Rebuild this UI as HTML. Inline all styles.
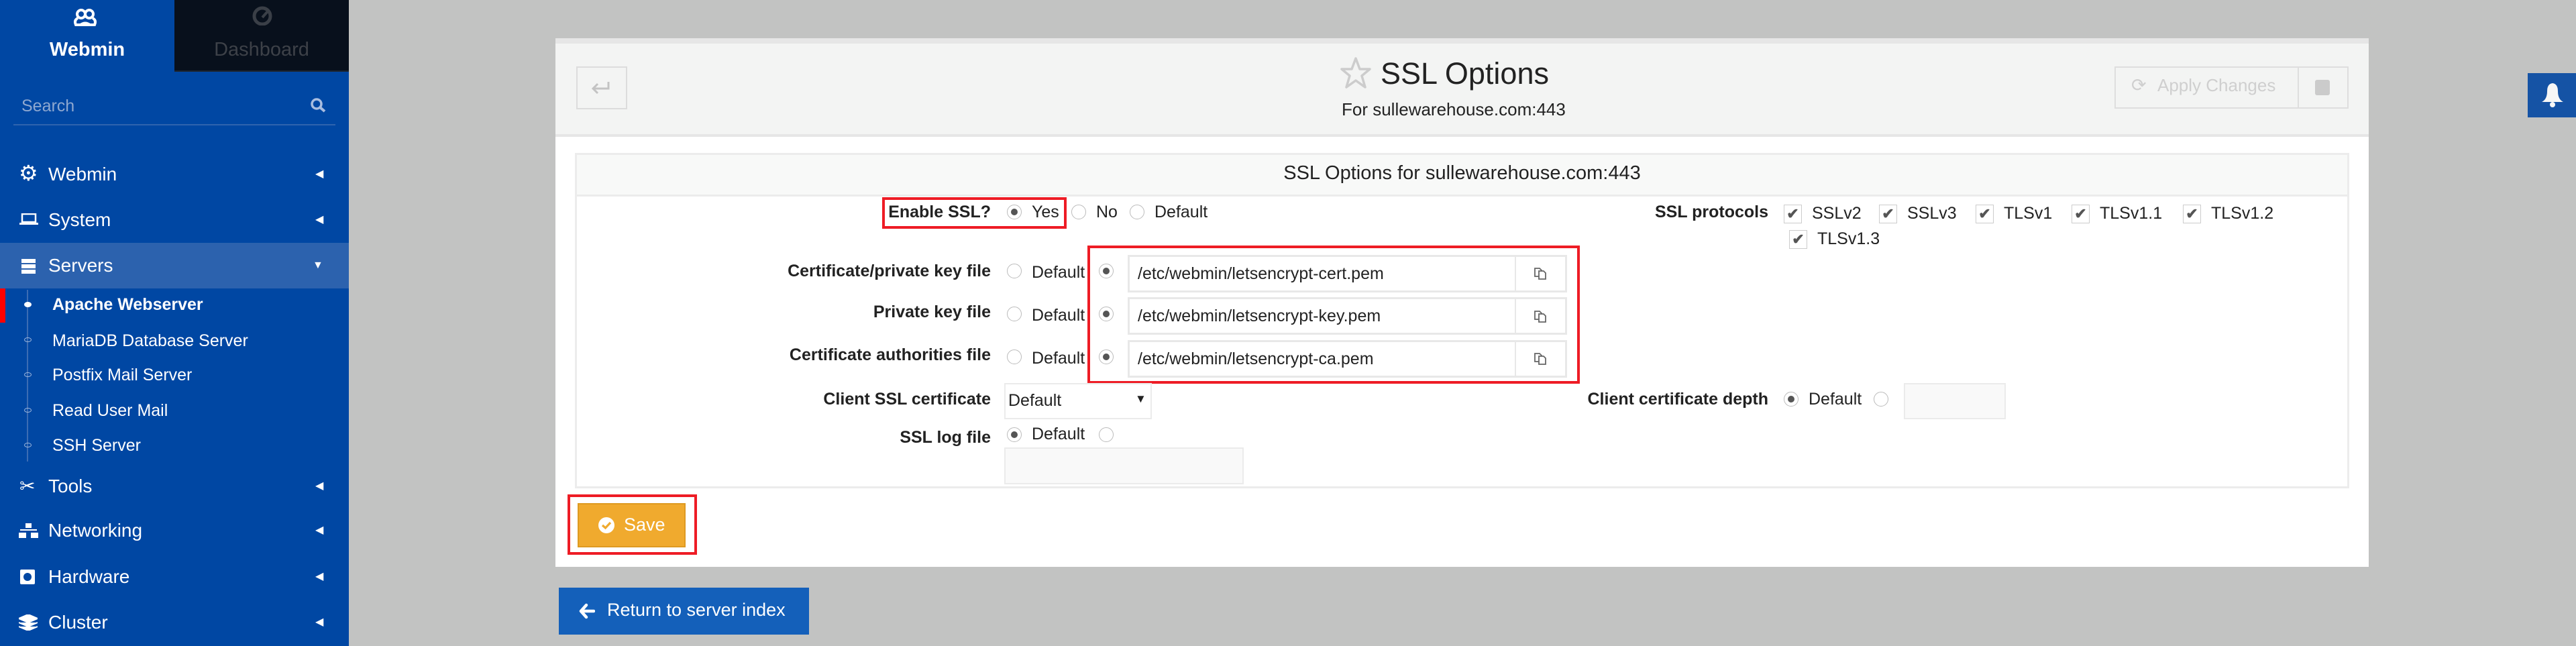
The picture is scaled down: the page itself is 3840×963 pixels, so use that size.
<!DOCTYPE html>
<html><head><meta charset="utf-8">
<style>
*{box-sizing:border-box;margin:0;padding:0}
body{width:3840px;height:963px;overflow:hidden;background:#c2c3c2;font-family:"Liberation Sans",sans-serif;position:relative;color:#222}
.a{position:absolute}
#sb{left:0;top:0;width:520px;height:963px;background:#0047a3}
.mi{position:absolute;left:0;width:520px;color:#fff;font-size:28px;line-height:40px}
.mi .t{position:absolute;left:72px}
.mi .c{position:absolute;left:470px;top:0;font-size:16px}
.si{position:absolute;left:78px;color:#fff;font-size:25px;line-height:36px}
.dot{position:absolute;left:36px;width:11px;height:7px;border:1.5px solid #9fb7dc;border-radius:50%}
.lbl{position:absolute;font-weight:bold;font-size:25px;text-align:right;line-height:30px}
.tx{position:absolute;font-size:25px;line-height:30px}
.rd{position:absolute;width:22px;height:22px;border:1.5px solid #bbb;border-radius:50%;background:#fff}
.rd.on::after{content:"";position:absolute;left:4.5px;top:4.5px;width:10px;height:10px;border-radius:50%;background:#555}
.cb{position:absolute;width:27px;height:28px;border:1.5px solid #ccc;background:#fff;color:#555;font-size:22px;text-align:center;line-height:26px;font-weight:bold}
.inp{position:absolute;height:56px;border:3px solid #e8e8e8;background:#fff;font-size:25px;line-height:50px;padding-left:12px}
.cp{position:absolute;width:78px;height:56px;border:3px solid #e8e8e8;border-left:2px solid #e8e8e8;background:#fff}
.red{position:absolute;border:4px solid #ee1c25}
</style></head><body>

<div id="sb" class="a">
  <div class="a" style="left:260px;top:0;width:260px;height:107px;background:#08101c;border-bottom:2px solid #1d2530"></div>
  <svg class="a" style="left:108px;top:10px" width="38" height="36" viewBox="0 0 38 36"><g fill="none" stroke="#fff" stroke-width="4"><circle cx="13" cy="11" r="6"/><circle cx="25" cy="11" r="6"/><path d="M8 17 Q2 20 5 27 H33 Q36 20 30 17"/><path d="M12 27 Q19 22 26 27"/></g></svg>
  <div class="a" style="left:0;top:58px;width:260px;text-align:center;color:#fff;font-weight:bold;font-size:29px">Webmin</div>
  <svg class="a" style="left:374px;top:8px" width="34" height="30" viewBox="0 0 34 30"><circle cx="17" cy="16" r="12" fill="none" stroke="#3a3f47" stroke-width="5"/><path d="M17 18 L25 9" stroke="#3a3f47" stroke-width="4"/></svg>
  <div class="a" style="left:260px;top:58px;width:260px;text-align:center;color:#3d4148;font-size:29px">Dashboard</div>
  <div class="a" style="left:32px;top:144px;color:#8ea8d0;font-size:25px">Search</div>
  <svg class="a" style="left:462px;top:146px" width="26" height="22" viewBox="0 0 26 22"><circle cx="10" cy="9" r="7" fill="none" stroke="#a9bde0" stroke-width="3.5"/><path d="M15 14 L22 20" stroke="#a9bde0" stroke-width="4"/></svg>
  <div class="a" style="left:20px;top:185px;width:480px;height:2px;background:#2f64ae"></div>

  <div class="a" style="left:0;top:362px;width:520px;height:68px;background:#2c62ae"></div>
  <div class="mi" style="top:240px"><span class="a" style="left:28px;font-size:32px;top:-2px">⚙</span><span class="t">Webmin</span><span class="c">◀</span></div>
  <div class="mi" style="top:308px"><svg class="a" style="left:29px;top:10px" width="28" height="18"><rect x="4" y="1" width="20" height="12" fill="none" stroke="#fff" stroke-width="2.5"/><rect x="0" y="14" width="28" height="3" fill="#fff"/></svg><span class="t">System</span><span class="c">◀</span></div>
  <div class="mi" style="top:376px"><svg class="a" style="left:32px;top:10px" width="21" height="22"><rect width="21" height="6" fill="#fff"/><rect y="8" width="21" height="6" fill="#fff"/><rect y="16" width="21" height="6" fill="#fff"/></svg><span class="t">Servers</span><span class="c" style="left:466px">▼</span></div>
  <div class="a" style="left:0;top:430px;width:8px;height:51px;background:#f00"></div>
  <div class="a" style="left:40px;top:432px;width:2px;height:256px;background:#3c6cb3"></div>
  <div class="a" style="left:36px;top:450px;width:11px;height:8px;border-radius:50%;background:#fff"></div>
  <div class="si" style="top:436px;font-weight:bold">Apache Webserver</div>
  <div class="dot" style="top:503px"></div><div class="si" style="top:490px">MariaDB Database Server</div>
  <div class="dot" style="top:555px"></div><div class="si" style="top:541px">Postfix Mail Server</div>
  <div class="dot" style="top:608px"></div><div class="si" style="top:594px">Read User Mail</div>
  <div class="dot" style="top:660px"></div><div class="si" style="top:646px">SSH Server</div>
  <div class="mi" style="top:705px"><span class="a" style="left:29px;font-size:28px">✂</span><span class="t">Tools</span><span class="c">◀</span></div>
  <div class="mi" style="top:771px"><svg class="a" style="left:28px;top:9px" width="29" height="22"><rect x="10" y="0" width="9" height="7" fill="#fff"/><rect x="2" y="9" width="25" height="2" fill="#fff"/><rect x="0" y="14" width="11" height="8" fill="#fff"/><rect x="18" y="14" width="11" height="8" fill="#fff"/></svg><span class="t">Networking</span><span class="c">◀</span></div>
  <div class="mi" style="top:840px"><svg class="a" style="left:30px;top:9px" width="22" height="22"><rect width="22" height="22" rx="2" fill="#fff"/><circle cx="11" cy="11" r="6" fill="#0047a3"/></svg><span class="t">Hardware</span><span class="c">◀</span></div>
  <div class="mi" style="top:908px"><svg class="a" style="left:28px;top:8px" width="28" height="24"><path d="M14 0 L28 6 L14 12 L0 6Z M0 12 L14 18 L28 12 M0 18 L14 24 L28 18" fill="#fff" stroke="#fff" stroke-width="2"/></svg><span class="t">Cluster</span><span class="c">◀</span></div>
</div>

<!-- main panel -->
<div class="a" style="left:828px;top:57px;width:2703px;height:788px;background:#fff"></div>
<div class="a" style="left:828px;top:57px;width:2703px;height:8px;background:#e6e6e6"></div>
<div class="a" style="left:828px;top:65px;width:2703px;height:136px;background:#f3f4f3"></div>
<div class="a" style="left:828px;top:200px;width:2703px;height:4px;background:#e6e6e6"></div>
<div class="a" style="left:859px;top:99px;width:76px;height:64px;border:2px solid #dcdcdc"></div>
<svg class="a" style="left:880px;top:120px" width="30" height="22"><path d="M27 2 V12 H4 M11 5 L4 12 L11 19" fill="none" stroke="#c3c3c3" stroke-width="3"/></svg>
<svg class="a" style="left:1998px;top:84px" width="46" height="50" viewBox="0 0 46 50"><path d="M23 3 L29 19 L44 19 L32 29 L37 46 L23 36 L9 46 L14 29 L2 19 L17 19Z" fill="none" stroke="#ccc" stroke-width="3.5" stroke-linejoin="round"/></svg>
<div class="a" style="left:2058px;top:84px;font-size:45px;color:#222">SSL Options</div>
<div class="a" style="left:2000px;top:148px;font-size:26px;color:#222">For sullewarehouse.com:443</div>
<div class="a" style="left:3152px;top:99px;width:349px;height:63px;border:2px solid #dedede"></div>
<div class="a" style="left:3425px;top:99px;width:2px;height:63px;background:#dedede"></div>
<div class="a" style="left:3177px;top:112px;font-size:27px;color:#cfcfcf">⟳</div>
<div class="a" style="left:3216px;top:112px;font-size:26px;color:#cfcfcf">Apply Changes</div>
<div class="a" style="left:3451px;top:119px;width:22px;height:23px;border-radius:3px;background:#cbcbcb"></div>
<div class="a" style="left:3768px;top:109px;width:72px;height:66px;background:#1553a5"></div>
<svg class="a" style="left:3787px;top:122px" width="36" height="40" viewBox="0 0 36 40"><path d="M18 2 Q10 3 10 14 Q10 26 2 30 H34 Q26 26 26 14 Q26 3 18 2Z" fill="#f6f6f6"/><circle cx="18" cy="34" r="4" fill="#f6f6f6"/></svg>

<!-- inner table -->
<div class="a" style="left:857px;top:228px;width:2645px;height:500px;border:3px solid #ececec;background:#fff"></div>
<div class="a" style="left:860px;top:231px;width:2639px;height:62px;background:#f8f9f8;border-bottom:3px solid #ececec"></div>
<div class="a" style="left:860px;top:242px;width:2639px;text-align:center;font-size:29px;color:#222">SSL Options for sullewarehouse.com:443</div>

<div class="lbl" style="left:1100px;width:377px;top:301px">Enable SSL?</div>
<div class="rd on" style="left:1501px;top:305px"></div><div class="tx" style="left:1538px;top:301px">Yes</div>
<div class="rd" style="left:1597px;top:305px"></div><div class="tx" style="left:1634px;top:301px">No</div>
<div class="rd" style="left:1684px;top:305px"></div><div class="tx" style="left:1721px;top:301px">Default</div>
<div class="red" style="left:1315px;top:294px;width:275px;height:47px"></div>

<div class="lbl" style="left:2300px;width:336px;top:301px">SSL protocols</div>
<div class="cb" style="left:2659px;top:305px">✔</div><div class="tx" style="left:2701px;top:303px">SSLv2</div>
<div class="cb" style="left:2801px;top:305px">✔</div><div class="tx" style="left:2843px;top:303px">SSLv3</div>
<div class="cb" style="left:2945px;top:305px">✔</div><div class="tx" style="left:2987px;top:303px">TLSv1</div>
<div class="cb" style="left:3088px;top:305px">✔</div><div class="tx" style="left:3130px;top:303px">TLSv1.1</div>
<div class="cb" style="left:3254px;top:305px">✔</div><div class="tx" style="left:3296px;top:303px">TLSv1.2</div>
<div class="cb" style="left:2667px;top:343px">✔</div><div class="tx" style="left:2709px;top:341px">TLSv1.3</div>

<div class="lbl" style="left:1000px;width:477px;top:389px">Certificate/private key file</div>
<div class="rd" style="left:1501px;top:393px"></div><div class="tx" style="left:1538px;top:391px">Default</div>
<div class="rd on" style="left:1638px;top:393px"></div>
<div class="inp" style="left:1681px;top:380px;width:580px">/etc/webmin/letsencrypt-cert.pem</div>
<div class="cp" style="left:2258px;top:380px"></div>

<div class="lbl" style="left:1000px;width:477px;top:450px">Private key file</div>
<div class="rd" style="left:1501px;top:457px"></div><div class="tx" style="left:1538px;top:455px">Default</div>
<div class="rd on" style="left:1638px;top:457px"></div>
<div class="inp" style="left:1681px;top:443px;width:580px">/etc/webmin/letsencrypt-key.pem</div>
<div class="cp" style="left:2258px;top:443px"></div>

<div class="lbl" style="left:1000px;width:477px;top:514px">Certificate authorities file</div>
<div class="rd" style="left:1501px;top:521px"></div><div class="tx" style="left:1538px;top:519px">Default</div>
<div class="rd on" style="left:1638px;top:521px"></div>
<div class="inp" style="left:1681px;top:507px;width:580px">/etc/webmin/letsencrypt-ca.pem</div>
<div class="cp" style="left:2258px;top:507px"></div>

<svg class="a" style="left:2286px;top:396px" width="22" height="22"><g fill="#fff" stroke="#666" stroke-width="1.8"><path d="M2 4 H9 L12 7 V16 H2Z"/><path d="M8 8 H15 L18 11 V20 H8Z"/></g></svg>
<svg class="a" style="left:2286px;top:460px" width="22" height="22"><g fill="#fff" stroke="#666" stroke-width="1.8"><path d="M2 4 H9 L12 7 V16 H2Z"/><path d="M8 8 H15 L18 11 V20 H8Z"/></g></svg>
<svg class="a" style="left:2286px;top:523px" width="22" height="22"><g fill="#fff" stroke="#666" stroke-width="1.8"><path d="M2 4 H9 L12 7 V16 H2Z"/><path d="M8 8 H15 L18 11 V20 H8Z"/></g></svg>
<div class="red" style="left:1621px;top:366px;width:734px;height:206px"></div>

<div class="lbl" style="left:1000px;width:477px;top:580px">Client SSL certificate</div>
<div class="a" style="left:1497px;top:571px;width:220px;height:54px;border:2px solid #ebebeb;background:#fff"></div>
<div class="tx" style="left:1503px;top:582px">Default</div>
<div class="a" style="left:1692px;top:585px;font-size:17px">▼</div>

<div class="lbl" style="left:2200px;width:436px;top:580px">Client certificate depth</div>
<div class="rd on" style="left:2659px;top:584px"></div><div class="tx" style="left:2696px;top:580px">Default</div>
<div class="rd" style="left:2793px;top:584px"></div>
<div class="a" style="left:2838px;top:571px;width:152px;height:54px;border:2px solid #ebebeb;background:#f9f9f9"></div>

<div class="lbl" style="left:1000px;width:477px;top:637px">SSL log file</div>
<div class="rd on" style="left:1501px;top:637px"></div><div class="tx" style="left:1538px;top:632px">Default</div>
<div class="rd" style="left:1638px;top:637px"></div>
<div class="a" style="left:1497px;top:667px;width:357px;height:55px;border:2px solid #ebebeb;background:#f9f9f9"></div>

<!-- save -->
<div class="red" style="left:846px;top:737px;width:193px;height:90px"></div>
<div class="a" style="left:861px;top:750px;width:161px;height:66px;background:#f0aa2e;border:2px solid #de9a22"></div>
<svg class="a" style="left:892px;top:771px" width="24" height="24"><circle cx="12" cy="12" r="12" fill="#fff"/><path d="M6 12 L10.5 16 L18 8" fill="none" stroke="#f0aa2e" stroke-width="3.2"/></svg>
<div class="a" style="left:930px;top:767px;color:#fff;font-size:27px">Save</div>

<!-- return -->
<div class="a" style="left:833px;top:876px;width:373px;height:70px;background:#1460ba"></div>
<svg class="a" style="left:863px;top:899px" width="24" height="24"><path d="M11 3 L3 12 L11 21 M3 12 H22" fill="none" stroke="#fff" stroke-width="4.5" stroke-linecap="round" stroke-linejoin="round"/></svg>
<div class="a" style="left:905px;top:894px;color:#fff;font-size:27px">Return to server index</div>
</body></html>
